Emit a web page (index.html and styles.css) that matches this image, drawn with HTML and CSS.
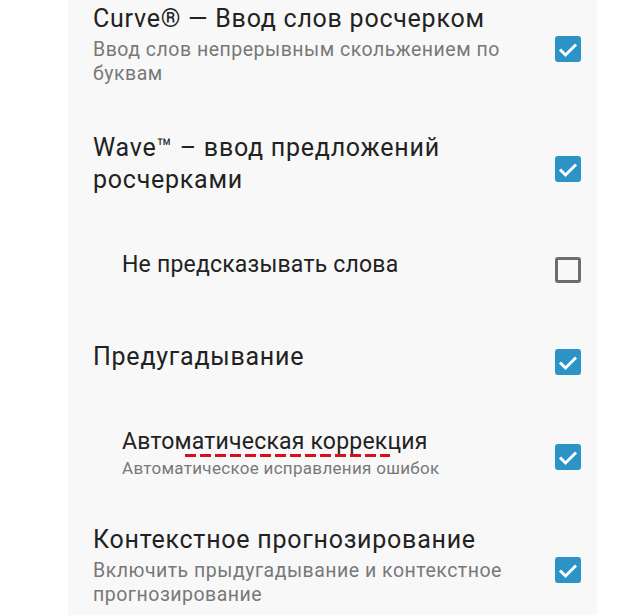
FILE: index.html
```html
<!DOCTYPE html>
<html lang="ru">
<head>
<meta charset="utf-8">
<title>Настройки ввода</title>
<link rel="stylesheet" href="styles.css">
</head>
<body>
<div class="panel">
  <ul class="list">
    <li class="row">
      <div class="text">
        <div class="title">Curve® — Ввод слов росчерком</div>
        <div class="summary">Ввод слов непрерывным скольжением по буквам</div>
      </div>
      <span class="check on"><svg viewBox="0 0 26 26"><path d="M5 13.5 L10.5 19 L21 8.5"/></svg></span>
    </li>
    <li class="row">
      <div class="text">
        <div class="title">Wave™ – ввод предложений росчерками</div>
      </div>
      <span class="check on"><svg viewBox="0 0 26 26"><path d="M5 13.5 L10.5 19 L21 8.5"/></svg></span>
    </li>
    <li class="row nested">
      <div class="text">
        <div class="title">Не предсказывать слова</div>
      </div>
      <span class="check off"></span>
    </li>
    <li class="row">
      <div class="text">
        <div class="title">Предугадывание</div>
      </div>
      <span class="check on"><svg viewBox="0 0 26 26"><path d="M5 13.5 L10.5 19 L21 8.5"/></svg></span>
    </li>
    <li class="row nested">
      <div class="text">
        <div class="title">Авто<span class="spell">матическая коррек</span>ция</div>
        <div class="summary small">Автоматическое исправления ошибок</div>
      </div>
      <span class="check on"><svg viewBox="0 0 26 26"><path d="M5 13.5 L10.5 19 L21 8.5"/></svg></span>
    </li>
    <li class="row">
      <div class="text">
        <div class="title">Контекстное прогнозирование</div>
        <div class="summary">Включить прыдугадывание и контекстное прогнозирование</div>
      </div>
      <span class="check on"><svg viewBox="0 0 26 26"><path d="M5 13.5 L10.5 19 L21 8.5"/></svg></span>
    </li>
  </ul>
</div>
</body>
</html>
```
FILE: styles.css
```css
html, body {
  margin: 0;
  padding: 0;
  background: #ffffff;
  overflow: hidden;
}
body {
  font-family: Roboto, "Noto Sans", sans-serif;
  height: 615px;
}
.panel {
  margin-left: 68px;
  width: 529px;
  height: 615px;
  background: #f8f8f8;
  overflow: hidden;
}
.list {
  list-style: none;
  margin: -20px 0 0 0;
  padding: 0;
}
.row {
  display: flex;
  align-items: center;
  gap: 20px;
  min-height: 92px;
  box-sizing: border-box;
  padding: 23px 16px 23px 25px;
}
.row.nested {
  padding-left: 54px;
}
.text {
  flex: 1;
  min-width: 0;
}
.title {
  font-size: 25px;
  letter-spacing: 0.75px;
  line-height: 32px;
  color: #222222;
}
.nested .title {
  font-size: 23px;
  letter-spacing: 0.2px;
}
.summary {
  margin-top: 3px;
  font-size: 19.5px;
  letter-spacing: 0.5px;
  line-height: 24px;
  color: #787878;
}
.summary.small {
  margin-top: 0;
  font-size: 17px;
  letter-spacing: 0.3px;
  line-height: 20px;
}
.spell {
  position: relative;
}
.spell::after {
  content: "";
  position: absolute;
  left: 10px;
  right: -3px;
  bottom: -2px;
  height: 3px;
  background-image: repeating-linear-gradient(90deg, #d80f18 0 11px, transparent 11px 15px);
}
.check {
  flex: none;
  width: 26px;
  height: 26px;
  box-sizing: border-box;
  border-radius: 3px;
  margin-top: 9px;
}
.check.on {
  background: #2b93c6;
}
.check.off {
  border: 3px solid #6c6c6c;
  border-radius: 3px;
}
.check svg {
  display: block;
  width: 26px;
  height: 26px;
  fill: none;
  stroke: #ffffff;
  stroke-width: 3;
  stroke-linecap: butt;
  stroke-linejoin: miter;
}
```
